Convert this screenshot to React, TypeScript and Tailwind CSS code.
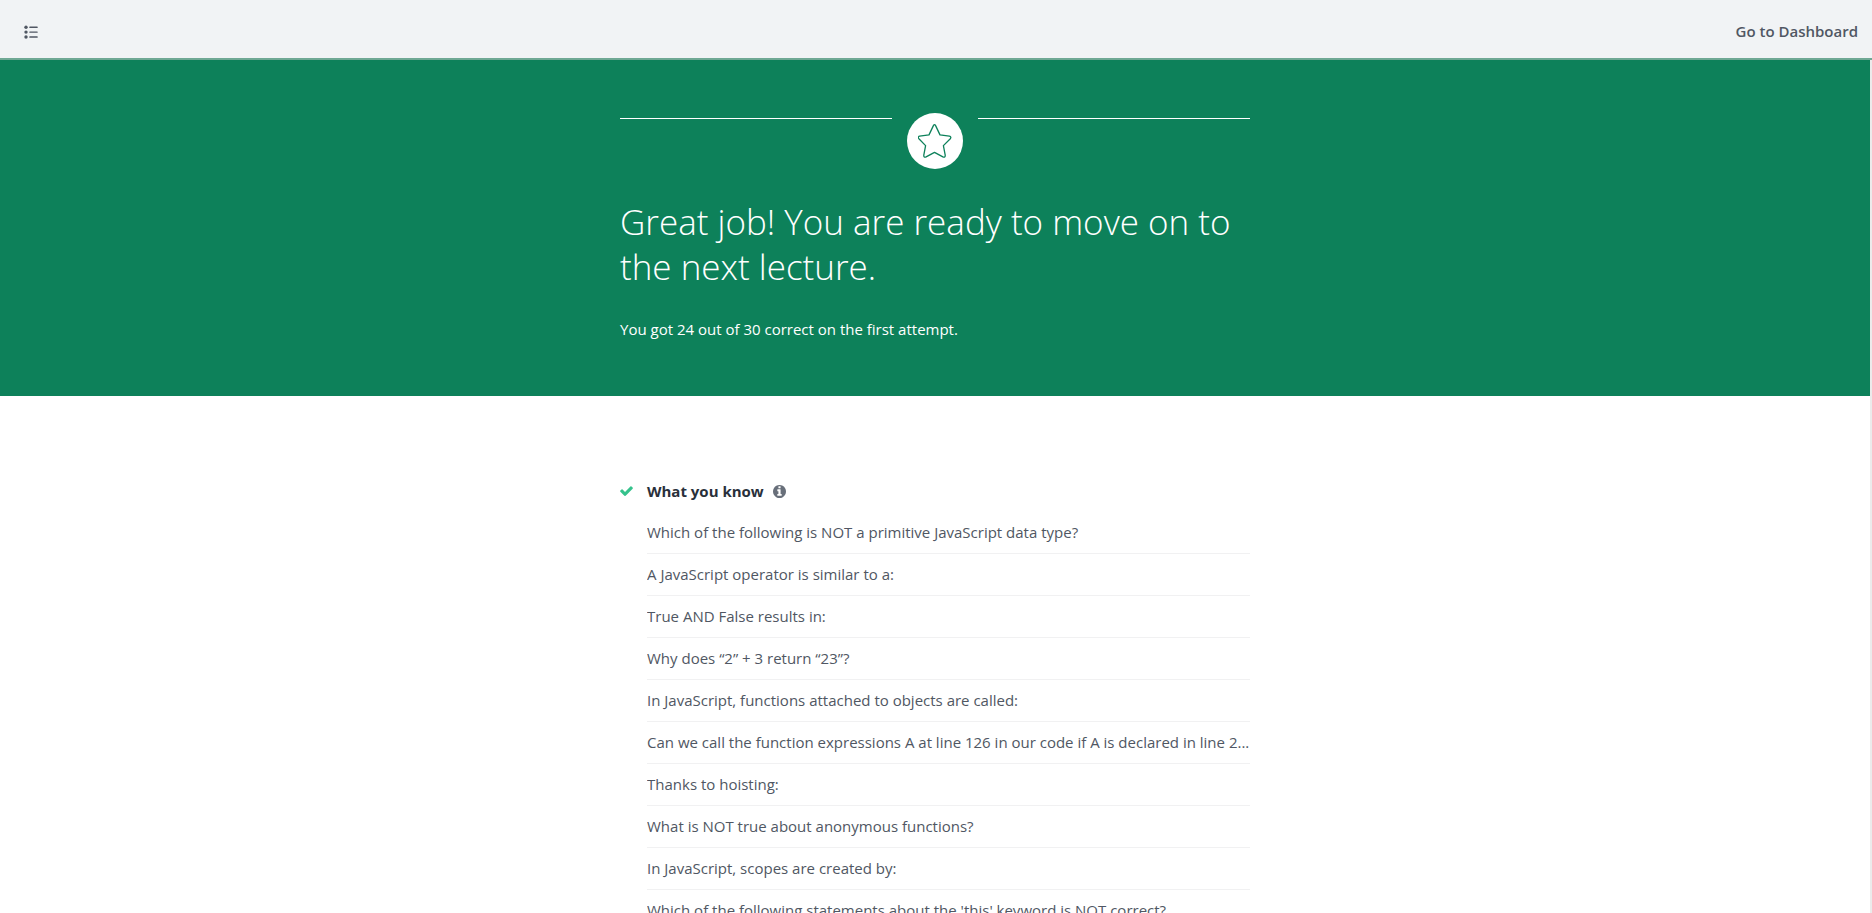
const knownQuestions = [
  "Which of the following is NOT a primitive JavaScript data type?",
  "A JavaScript operator is similar to a:",
  "True AND False results in:",
  "Why does “2” + 3 return “23”?",
  "In JavaScript, functions attached to objects are called:",
  "Can we call the function expressions A at line 126 in our code if A is declared in line 2...",
  "Thanks to hoisting:",
  "What is NOT true about anonymous functions?",
  "In JavaScript, scopes are created by:",
  "Which of the following statements about the 'this' keyword is NOT correct?",
];

function ListIcon() {
  return (
    <svg width="14" height="14" viewBox="0 0 14 14" fill="#505763" aria-hidden="true">
      <circle cx="2" cy="2.3" r="1.7" />
      <circle cx="2" cy="7.1" r="1.7" />
      <circle cx="2" cy="12" r="1.7" />
      <rect x="5.3" y="1.6" width="8.4" height="1.4" rx="0.5" />
      <rect x="5.3" y="6.4" width="8.4" height="1.4" rx="0.5" />
      <rect x="5.3" y="11.3" width="8.4" height="1.4" rx="0.5" />
    </svg>
  );
}

function StarIcon() {
  return (
    <svg width="34" height="34" viewBox="0 0 34 34" fill="none" stroke="#0d815a" strokeWidth="1.3" strokeLinejoin="round" aria-hidden="true">
      <path d="M15.4 1.6Q16.5 -.3 17.6 1.6L22 10.9L31.4 12.2Q33.7 12.8 32.3 14.7L25.4 21.6L27.2 31.2Q27.4 33.9 24.9 32.9L16.5 28.4L8.1 32.9Q5.6 33.9 5.8 31.2L7.6 21.6L.9 14.7Q-.6 12.8 1.6 12.2L11 10.9Z" />
    </svg>
  );
}

function CheckIcon() {
  return (
    <svg className="h-[10px] w-[13px]" viewBox="121 302 1550 1220" fill="#35c28c" aria-hidden="true">
      <path d="M1671 566q0 40-28 68l-724 724-136 136q-28 28-68 28t-68-28l-136-136-362-362q-28-28-28-68t28-68l136-136q28-28 68-28t68 28l294 295 656-657q28-28 68-28t68 28l136 136q28 28 28 68z" />
    </svg>
  );
}

function InfoIcon() {
  return (
    <svg className="size-[13px]" viewBox="128 128 1536 1536" fill="#686f7a" aria-hidden="true">
      <path d="M1152 1376v-160q0-14-9-23t-23-9h-96v-512q0-14-9-23t-23-9h-320q-14 0-23 9t-9 23v160q0 14 9 23t23 9h96v320h-96q-14 0-23 9t-9 23v160q0 14 9 23t23 9h448q14 0 23-9t9-23zm-128-896v-160q0-14-9-23t-23-9h-192q-14 0-23 9t-9 23v160q0 14 9 23t23 9h192q14 0 23-9t9-23zm640 416q0 209-103 385.500t-279.500 279.500-385.500 103-385.500-103-279.500-279.500-103-385.500 103-385.500 279.500-279.500 385.500-103 385.500 103 279.500 279.500 103 385.500z" />
    </svg>
  );
}

export default function App() {
  return (
    <div className="flex h-screen flex-col overflow-hidden bg-white font-['Open_Sans',sans-serif] text-[15px] text-[#505763]">
      <header className="flex h-[60px] shrink-0 items-center justify-between border-b-2 border-[#6fa894] bg-[#f1f3f5] pt-1 pr-3 pl-6">
        <button type="button" aria-label="Contents" className="pt-0.5">
          <ListIcon />
        </button>
        <a href="#dashboard" className="mr-0.5 font-semibold">
          Go to Dashboard
        </a>
      </header>

      <main className="min-h-0 flex-1 overflow-hidden border-r-2 border-[#ebebeb]">
        <section className="bg-[#0d815a] px-4 pt-[53px] pb-14 text-white">
          <div className="mx-auto max-w-[630px]">
            <div className="flex justify-between">
              <span className="mt-[5px] h-px w-[272px] bg-white" />
              <span className="flex size-14 items-center justify-center rounded-full bg-white">
                <StarIcon />
              </span>
              <span className="mt-[5px] h-px w-[272px] bg-white" />
            </div>
            <h1 className="mt-[30px] text-[35px] leading-[45px] font-light">
              Great job! You are ready to move on to the next lecture.
            </h1>
            <p className="mt-[29px] leading-[22px]">You got 24 out of 30 correct on the first attempt.</p>
          </div>
        </section>

        <section className="px-4 pt-[83px]">
          <div className="mx-auto max-w-[630px]">
            <div className="flex h-6 items-center">
              <CheckIcon />
              <h2 className="ml-[14px] font-bold text-[#29303b]">What you know</h2>
              <button type="button" aria-label="About what you know" className="ml-[9px]">
                <InfoIcon />
              </button>
            </div>
            <ul className="mt-[9px] ml-[27px]">
              {knownQuestions.map((question) => (
                <li key={question} className="h-[42px] truncate border-b border-[#f1f1f2] leading-[41px]">
                  {question}
                </li>
              ))}
            </ul>
          </div>
        </section>
      </main>
    </div>
  );
}
